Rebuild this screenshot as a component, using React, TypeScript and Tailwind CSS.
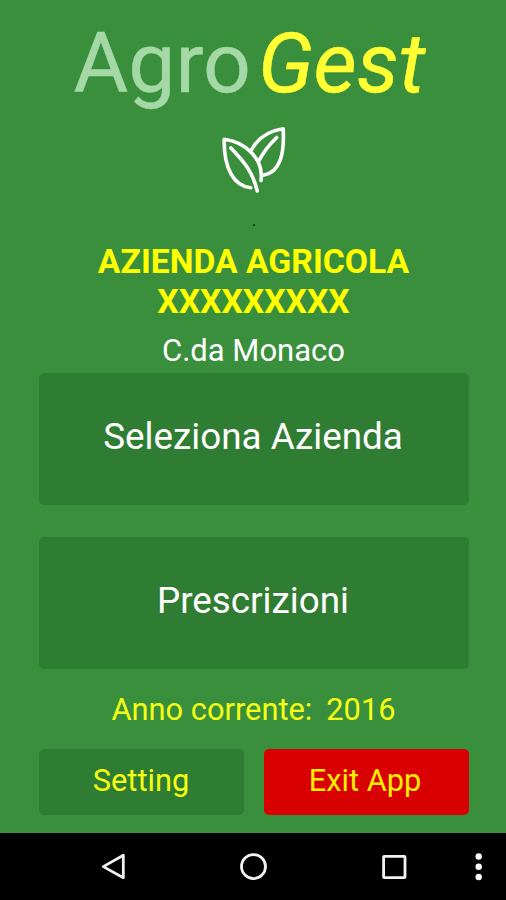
import type { ReactNode } from 'react'

const Leaves = () => (
  <svg
    width="68"
    height="70"
    viewBox="0 0 68 70"
    fill="none"
    stroke="#fff"
    strokeWidth="3.6"
    strokeLinecap="round"
    strokeLinejoin="round"
  >
    <path d="M30.7 62.7C14 61 3.6 43.5 4.2 14.3C25 17 44 33.5 41 55.5" />
    <path d="M10.9 22.9C23.5 36 33 47 37.2 66" />
    <path d="M31.7 24.5C38 13 48 6 63.2 3.7C64.5 28.5 60.5 47 43.3 50.3" />
    <path d="M56.7 12.5C49 20 44 25.5 38.8 36" />
  </svg>
)

const BigButton = ({ children }: { children: ReactNode }) => (
  <button className="block h-[132px] w-full rounded-[5px] bg-[#2f7d32] pb-1 pr-px text-[36.8px] text-white">
    {children}
  </button>
)

export default function App() {
  return (
    <div className="flex h-[900px] w-[506px] flex-col overflow-hidden bg-[#3a8f3d] font-['Roboto',sans-serif]">
      <main className="h-[833px] pl-[38.5px] pr-[37.5px] text-center">
        <h1 className="flex h-[125px] gap-[7px] pl-[35px] pt-[14px] text-[84px] leading-[100px]">
          <span className="text-[#a5d8a7] [-webkit-text-stroke:0.4px_#a5d8a7]">Agro</span>
          <em className="text-[#ffff33] [-webkit-text-stroke:0.5px_#ffff33]">Gest</em>
        </h1>

        <div className="flex h-[92px] justify-center">
          <Leaves />
        </div>
        <div className="mx-auto mt-[7px] h-[2px] w-[2px] bg-[#123d14]" />

        <h2 className="mt-[16px] text-[33.7px] font-bold leading-[40px] text-[#ffff00]">
          AZIENDA AGRICOLA
          <br />
          XXXXXXXXX
        </h2>
        <p className="h-[51px] pt-[9px] text-[31px] leading-[40px] text-white">C.da Monaco</p>

        <div className="flex flex-col gap-8">
          <BigButton>Seleziona Azienda</BigButton>
          <BigButton>Prescrizioni</BigButton>
        </div>

        <p className="flex h-[80px] justify-center gap-[14px] pt-[21px] text-[30.8px] leading-[40px] text-[#f4ff14]">
          <span>Anno corrente:</span>
          <span>2016</span>
        </p>

        <div className="grid grid-cols-2 gap-5 text-[30.8px]">
          <button className="h-[66px] rounded-[5px] bg-[#2f7d32] pb-[2px] text-[#f4ff14]">Setting</button>
          <button className="h-[66px] rounded-[5px] bg-[#d80000] pb-[2px] pr-[2px] text-[#ffee00]">Exit App</button>
        </div>
      </main>

      <nav className="h-[67px] bg-black">
        <svg width="506" height="67" viewBox="0 0 506 67" fill="none" stroke="#f2f2f2" strokeWidth="2.8">
          <path d="M123.3 22.3V44.7L103.3 33.6Z" strokeLinejoin="round" />
          <circle cx="253.5" cy="33.6" r="12" />
          <rect x="383.6" y="23.4" width="21.4" height="21.2" rx="0.6" />
          <g fill="#fff" stroke="none">
            <circle cx="478.7" cy="23.5" r="3.2" />
            <circle cx="478.7" cy="33.7" r="3.2" />
            <circle cx="478.7" cy="44" r="3.2" />
          </g>
        </svg>
      </nav>
    </div>
  )
}
